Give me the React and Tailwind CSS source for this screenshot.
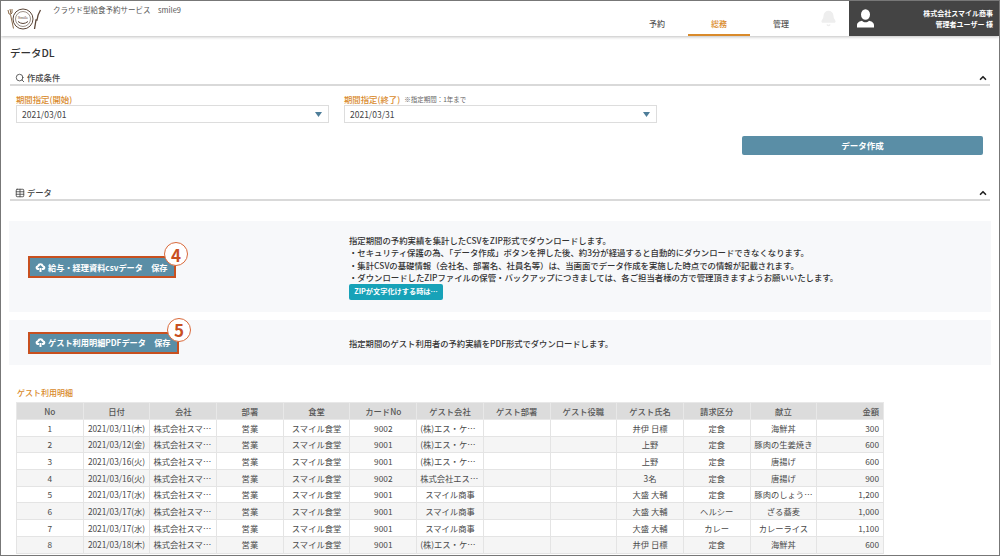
import { ChevronUp, Search, Table, Bell } from "lucide-react";

const font = { fontFamily: '"Noto Sans CJK JP", "Noto Sans", sans-serif' };

const columns = [
  "No", "日付", "会社", "部署", "食堂", "カードNo", "ゲスト会社",
  "ゲスト部署", "ゲスト役職", "ゲスト氏名", "請求区分", "献立", "金額",
];

const rows = [
  ["1", "2021/03/11(木)", "9002", "(株)エス・ケ…", "井伊 日標", "定食", "海鮮丼", "300"],
  ["2", "2021/03/12(金)", "9001", "(株)エス・ケ…", "上野", "定食", "豚肉の生姜焼き", "600"],
  ["3", "2021/03/16(火)", "9001", "(株)エス・ケ…", "上野", "定食", "唐揚げ", "600"],
  ["4", "2021/03/16(火)", "9002", "株式会社エス…", "3名", "定食", "唐揚げ", "900"],
  ["5", "2021/03/17(水)", "9001", "スマイル商事", "大盛 大輔", "定食", "豚肉のしょう…", "1,200"],
  ["6", "2021/03/17(水)", "9001", "スマイル商事", "大盛 大輔", "ヘルシー", "ざる蕎麦", "1,000"],
  ["7", "2021/03/17(水)", "9001", "スマイル商事", "大盛 大輔", "カレー", "カレーライス", "1,100"],
  ["8", "2021/03/18(木)", "9001", "(株)エス・ケ…", "井伊 日標", "定食", "海鮮丼", "600"],
];

function Logo() {
  return (
    <svg width="36" height="30" viewBox="0 0 36 30" fill="none" stroke="#5b4638">
      <circle cx="17" cy="14" r="10" strokeWidth="1" />
      <circle cx="17" cy="14" r="7.5" strokeWidth="0.6" />
      <text x="17" y="13.5" textAnchor="middle" fontSize="4.5" fill="#5b4638" stroke="none" style={{ fontFamily: '"Liberation Serif", serif' }}>Smile</text>
      <path d="M12 16.5q5 4 10 0" strokeWidth="1" />
      <path d="M2 5l1 4M4 4l1 5M6 4l0 4M3 9q2 1 3-1M4.5 9.5l3 14" strokeWidth="1" stroke="#8a6a4a" />
      <path d="M34.5 5q-3 5-3.5 10l-1 0-1.5 9" strokeWidth="1.3" />
    </svg>
  );
}

function CloudUp() {
  return (
    <svg width="11" height="9" viewBox="0 0 11 9" fill="white" className="mr-[2px] shrink-0">
      <path d="M2.5 7a2.3 2.3 0 0 1-.2-4.5A3.3 3.3 0 0 1 8.6 2.5 2.3 2.3 0 0 1 8.5 7H7V5h1.5L5.5 2 2.5 5H4v2z" />
      <rect x="4.5" y="5" width="2" height="4" />
    </svg>
  );
}

function UserIcon() {
  return (
    <svg width="19" height="19" viewBox="0 0 19 19" fill="white">
      <ellipse cx="9.5" cy="5.5" rx="4.5" ry="5.3" />
      <path d="M1 18.5v-2.5c0-2.500 3-4 5-4.300 1 1 2.300 1.500 3.500 1.500s2.500-.5 3.500-1.500c2 .3 5 1.800 5 4.300v2.500z" />
    </svg>
  );
}

function SectionHead({ icon, title }) {
  return (
    <div className="mx-px flex h-[11px] items-center justify-between border-b-2 border-[#d9d9d9] box-content pb-px">
      <div className="flex items-center gap-[2px] pl-[5px] text-[8.3px] font-medium text-[#444]">
        {icon}
        <span>{title}</span>
      </div>
      <ChevronUp size={10} strokeWidth={4} className="mr-[2px] text-[#222]" />
    </div>
  );
}

function DateField({ label, note, value }) {
  return (
    <div className="w-[313px]">
      <div className="flex h-[11px] items-center gap-1 text-[8.4px] font-medium text-[#d98a2b]">
        {label}
        {note && <span className="text-[6.5px] font-normal text-[#666]">{note}</span>}
      </div>
      <div className="flex h-[18px] items-center justify-between border border-[#ddd] bg-white px-[5px] text-[8.5px] text-[#444]">
        <span>{value}</span>
        <svg width="7" height="5" viewBox="0 0 7 5" fill="#4d7d99" className="mr-[1px]">
          <path d="M0 0h7L3.5 5z" />
        </svg>
      </div>
    </div>
  );
}

function SaveButton({ label, width, num }) {
  return (
    <div className={`relative ${width}`}>
      <div className="flex h-[22px] items-center whitespace-nowrap border-2 border-[#c8501f] bg-[#5a8ea6] pl-[5px] text-[8.2px] font-bold text-white">
        <CloudUp />
        {label}
      </div>
      <div className="absolute -right-[12px] -top-[14px] flex h-[24px] w-[24px] items-center justify-center rounded-full border border-[#d9693a] bg-white text-[17px] font-bold leading-none text-[#c8501f]">
        {num}
      </div>
    </div>
  );
}

export default function App() {
  return (
    <div className="h-[556px] w-[1000px] overflow-hidden border border-[#777] bg-white text-[#333]" style={font}>
      <header className="flex h-[35px] items-stretch justify-between shadow-[0_1px_3px_rgba(0,0,0,0.25)]">
        <div className="flex">
          <div className="ml-[5px] mt-[4px]"><Logo /></div>
          <div className="ml-[11px] mt-[3px] text-[7.5px] text-[#555]">クラウド型給食予約サービス　smile9</div>
        </div>
        <div className="flex">
          <nav className="flex text-[8px] font-medium text-[#555]">
            <div className="flex w-[62px] items-end justify-center pb-[6px]">予約</div>
            <div className="flex w-[62px] items-end justify-center border-b-2 border-[#d98a2b] pb-[4px] text-[#d98a2b]">総務</div>
            <div className="flex w-[62px] items-end justify-center pb-[6px]">管理</div>
          </nav>
          <div className="flex w-[37px] items-center justify-center pr-[4px] text-[#eee]">
            <Bell size={17} fill="#eee" />
          </div>
          <div className="flex w-[150px] items-center justify-between bg-[#444] pl-[7px] pr-[6px] text-white">
            <UserIcon />
            <div className="text-right text-[7px] font-bold leading-[11px]">
              <div>株式会社スマイル商事</div>
              <div>管理者ユーザー 様</div>
            </div>
          </div>
        </div>
      </header>

      <main className="px-[8px]">
        <h1 className="mt-[9px] h-[16px] pl-px text-[10.5px] font-medium leading-[16px] text-[#333]">データDL</h1>
        <div className="mt-[11px]">
          <SectionHead icon={<Search size={10} strokeWidth={2} />} title="作成条件" />
        </div>

        <div className="mt-[8px] flex gap-[15px] pl-[7px]">
          <DateField label="期間指定(開始)" value="2021/03/01" />
          <DateField label="期間指定(終了)" note="※指定期間：1年まで" value="2021/03/31" />
        </div>

        <div className="mt-[13px] flex justify-end pr-[8px]">
          <div className="flex h-[19px] w-[241px] items-center justify-center rounded-[2px] bg-[#5a8ea6] text-[8.5px] font-bold text-white">データ作成</div>
        </div>

        <div className="mt-[32px]">
          <SectionHead icon={<Table size={10} strokeWidth={2} />} title="データ" />
        </div>

        <section className="mt-[20px] flex h-[91px] bg-[#f7f8fa]">
          <div className="w-[340px] pl-[19px] pt-[35px]">
            <SaveButton label="給与・経理資料csvデータ　保存" width="w-[148px]" num="4" />
          </div>
          <div className="pt-[13px] text-[8.4px] font-medium leading-[12.4px] text-[#333]">
            <p>指定期間の予約実績を集計したCSVをZIP形式でダウンロードします。</p>
            <p>・セキュリティ保護の為、「データ作成」ボタンを押した後、約3分が経過すると自動的にダウンロードできなくなります。</p>
            <p>・集計CSVの基礎情報（会社名、部署名、社員名等）は、当画面でデータ作成を実施した時点での情報が記載されます。</p>
            <p>・ダウンロードしたZIPファイルの保管・バックアップにつきましては、各ご担当者様の方で管理頂きますようお願いいたします。</p>
            <div className="flex h-[16px] w-[94px] items-center justify-center rounded-[2px] bg-[#17a2b8] text-[7.2px] font-bold text-white">ZIPが文字化けする時は…</div>
          </div>
        </section>

        <section className="mt-[8px] flex h-[45px] items-center bg-[#f7f8fa]">
          <div className="w-[340px] pl-[19px]">
            <SaveButton label="ゲスト利用明細PDFデータ　保存" width="w-[151px]" num="5" />
          </div>
          <p className="pt-[1px] text-[8.3px] font-medium text-[#333]">指定期間のゲスト利用者の予約実績をPDF形式でダウンロードします。</p>
        </section>

        <h2 className="mt-[23px] h-[10px] pl-[8px] text-[8px] font-medium leading-[10px] text-[#d98a2b]">ゲスト利用明細</h2>

        <div className="ml-[7px] mt-[4px] w-[868px]">
          <table className="w-full table-fixed border-collapse text-[8.3px] text-[#4a4a4a]">
            <thead>
              <tr className="h-[17px] bg-[#dcdcdc]">
                {columns.map((c, i) => (
                  <th key={c} className={`border border-[#e8e8e8] px-1 font-medium text-[#555] ${i === 12 ? "text-right" : "text-center"}`}>{c}</th>
                ))}
              </tr>
            </thead>
            <tbody>
              {rows.map((r, i) => (
                <tr key={r[0]} className={`h-[16.7px] ${i % 2 ? "bg-[#f5f5f5]" : "bg-white"}`}>
                  <td className="border border-[#e4e4e4] text-center">{r[0]}</td>
                  <td className="border border-[#e4e4e4] whitespace-nowrap text-center">{r[1]}</td>
                  <td className="border border-[#e4e4e4] whitespace-nowrap px-[3px]">株式会社スマ…</td>
                  <td className="border border-[#e4e4e4] text-center">営業</td>
                  <td className="border border-[#e4e4e4] text-center">スマイル食堂</td>
                  <td className="border border-[#e4e4e4] text-center">{r[2]}</td>
                  <td className={`border border-[#e4e4e4] whitespace-nowrap px-[3px] ${r[3].startsWith("スマイル") ? "text-center" : ""}`}>{r[3]}</td>
                  <td className="border border-[#e4e4e4]"></td>
                  <td className="border border-[#e4e4e4]"></td>
                  <td className="border border-[#e4e4e4] text-center">{r[4]}</td>
                  <td className="border border-[#e4e4e4] text-center">{r[5]}</td>
                  <td className="border border-[#e4e4e4] whitespace-nowrap text-center">{r[6]}</td>
                  <td className="border border-[#e4e4e4] px-1 text-right">{r[7]}</td>
                </tr>
              ))}
            </tbody>
          </table>
        </div>
      </main>
    </div>
  );
}
